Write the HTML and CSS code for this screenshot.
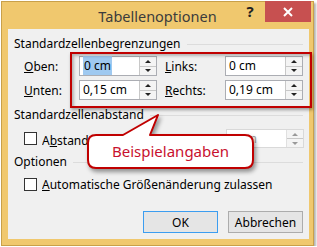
FILE: index.html
```html
<!DOCTYPE html>
<html lang="de">
<head>
    <meta charset="UTF-8">
    <title>Tabellenoptionen</title>
    <link rel="stylesheet" href="styles.css">
</head>
<body>
<div class="window">
    <div class="titlebar">
        <span></span>
        <div class="title">Tabellenoptionen</div>
        <div class="controls">
            <span class="help">?</span>
            <span class="close">
                <svg width="10" height="10" viewBox="0 0 10 10"><path d="M1 1 L9 9 M9 1 L1 9" stroke="#fff" stroke-width="2"/></svg>
            </span>
        </div>
    </div>

    <div class="content">
        <div class="legend">Standardzellenbegrenzungen</div>
        <div class="fields">
            <label><u>O</u>ben:</label>
            <div class="spin">
                <span class="val"><span class="sel">0 cm</span></span>
                <span class="arrows"><i class="up"></i><i class="down"></i></span>
            </div>
            <label class="right"><u>L</u>inks:</label>
            <div class="spin">
                <span class="val">0 cm</span>
                <span class="arrows"><i class="up"></i><i class="down"></i></span>
            </div>
            <label><u>U</u>nten:</label>
            <div class="spin">
                <span class="val">0,15 cm</span>
                <span class="arrows"><i class="up"></i><i class="down"></i></span>
            </div>
            <label class="right"><u>R</u>echts:</label>
            <div class="spin">
                <span class="val">0,19 cm</span>
                <span class="arrows"><i class="up"></i><i class="down"></i></span>
            </div>
        </div>

        <div class="legend second">Standardzellenabstand</div>
        <div class="check-row spacing">
            <span class="box"></span>
            <span class="check-text">A<u>b</u>stand zwischen Zellen zulassen</span>
            <div class="spin disabled">
                <span class="val">0 cm</span>
                <span class="arrows"><i class="up"></i><i class="down"></i></span>
            </div>
        </div>

        <div class="legend third">Optionen</div>
        <div class="check-row">
            <span class="box"></span>
            <span class="check-text"><u>A</u>utomatische Größenänderung zulassen</span>
        </div>

        <div class="buttons">
            <button class="default">OK</button>
            <button>Abbrechen</button>
        </div>
    </div>

    <!-- Markierung und Sprechblase -->
    <div class="mark"></div>
    <div class="callout">
        <svg width="172" height="62" viewBox="0 0 172 62">
            <path d="M10 23 L37 23 L72 3 L64 23 L159 23 Q167 23 167 31 L167 48 Q167 56 159 56 L10 56 Q2 56 2 48 L2 31 Q2 23 10 23 Z"
                  fill="#fff" stroke="#c00000" stroke-width="2" stroke-linejoin="round"/>
        </svg>
        <span class="callout-text">Beispielangaben</span>
    </div>
</div>
</body>
</html>
```
FILE: styles.css
```css
body {
    margin: 0;
    background: #ffffff;
    font-family: "Noto Sans", sans-serif;
    font-size: 12px;
    color: #000;
}

.window {
    position: relative;
    margin: 1px 0 0 1px;
    width: 311px;
    height: 243px;
    border: 1px solid #c9a04a;
    background: #f0c86e;
    box-shadow: 2px 2px 2px rgba(0, 0, 0, 0.3);
}

.titlebar {
    display: grid;
    grid-template-columns: 1fr auto 1fr;
    align-items: start;
    height: 28px;
    margin-top: -1px;
}

.title {
    font-size: 14.5px;
    line-height: 18px;
    margin-top: 6px;
    color: #3c3c3c;
}

.controls {
    display: flex;
    justify-self: end;
    margin-right: 2px;
}

.help {
    width: 30px;
    height: 21px;
    font-size: 15px;
    font-weight: bold;
    line-height: 21px;
    text-align: center;
    color: #222;
}

.close {
    display: flex;
    align-items: center;
    justify-content: center;
    width: 46px;
    height: 21px;
    background: #c75050;
}

.content {
    margin: 0 4px 0 6px;
    height: 210px;
    padding: 7px 6px 0 6px;
    box-sizing: border-box;
    background: #f0f0f0;
}

.legend {
    display: flex;
    align-items: center;
    height: 16px;
    line-height: 16px;
}

.legend::after {
    content: "";
    flex: 1;
    margin-left: 6px;
    border-top: 1px solid #dcdcdc;
}

.legend.second {
    margin-top: 7px;
}

.legend.third {
    margin-top: 6px;
}

.fields {
    display: grid;
    grid-template-columns: 55px 78px 68px 78px;
    row-gap: 4px;
    align-items: center;
    margin: 4px 0 0 10px;
}

.fields label.right {
    padding-left: 8px;
}

.spin {
    display: flex;
    height: 20px;
    box-sizing: border-box;
    border: 1px solid #abadb3;
    background: #fff;
}

.spin .val {
    flex: 1;
    padding-left: 3px;
    line-height: 18px;
}

.sel {
    background: #9fc9f0;
    padding: 1px 1px;
}

.arrows {
    display: flex;
    flex-direction: column;
    width: 16px;
    border-left: 1px solid #c8c8c8;
    background: #f4f4f4;
}

.arrows i {
    flex: 1;
    display: flex;
    align-items: center;
    justify-content: center;
}

.arrows i + i {
    border-top: 1px solid #c8c8c8;
}

.arrows .up::before {
    content: "";
    border-left: 3px solid transparent;
    border-right: 3px solid transparent;
    border-bottom: 3px solid #222;
}

.arrows .down::before {
    content: "";
    border-left: 3px solid transparent;
    border-right: 3px solid transparent;
    border-top: 3px solid #222;
}

.check-row {
    display: flex;
    align-items: center;
    height: 19px;
    margin: 5px 0 0 10px;
}

.check-row.spacing {
    margin-top: 6px;
}

.check-row.spacing .check-text {
    align-self: flex-start;
    line-height: 16px;
    padding-top: 4px;
}

.box {
    flex-shrink: 0;
    width: 13px;
    height: 13px;
    box-sizing: border-box;
    border: 1px solid #333;
    background: #fff;
    margin-right: 5px;
}

.check-text {
    flex: 1;
    min-width: 0;
    white-space: nowrap;
    overflow: hidden;
}

.spin.disabled {
    flex-shrink: 0;
    width: 78px;
    height: 19px;
    margin-right: -1px;
    border-color: #d9d9d9;
    color: #a0a0a0;
}

.spin.disabled .arrows {
    border-left-color: #e0e0e0;
}

.spin.disabled .arrows i::before {
    border-top-color: #999;
    border-bottom-color: #999;
}

.buttons {
    display: flex;
    justify-content: flex-end;
    gap: 10px;
    margin-top: 17px;
}

button {
    width: 75px;
    height: 22px;
    padding: 0;
    font-family: "Noto Sans", sans-serif;
    font-size: 12px;
    color: #000;
    background: #e5e5e5;
    border: 1px solid #acacac;
}

button.default {
    border-color: #3c9df0;
}

.mark {
    position: absolute;
    left: 68px;
    top: 50px;
    width: 242px;
    height: 56px;
    box-sizing: border-box;
    border: 2px solid #c00000;
    box-shadow: 1px 2px 3px rgba(0, 0, 0, 0.35), inset 2px 2px 3px rgba(0, 0, 0, 0.25);
}

.callout {
    position: absolute;
    left: 84px;
    top: 110px;
    width: 172px;
    height: 62px;
}

.callout svg {
    position: absolute;
    left: 0;
    top: 0;
    filter: drop-shadow(2px 3px 2px rgba(0, 0, 0, 0.4));
}

.callout-text {
    position: absolute;
    left: 2px;
    top: 23px;
    width: 165px;
    height: 33px;
    line-height: 33px;
    text-align: center;
    font-size: 15px;
    color: #c8102e;
}
```
